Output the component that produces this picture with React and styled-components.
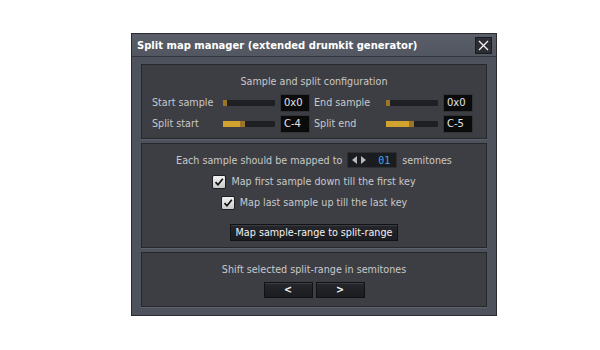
import React from 'react';
import styled, { createGlobalStyle } from 'styled-components';

const Global = createGlobalStyle`
  html, body {
    margin: 0;
    background: #ffffff;
  }
  body {
    font-family: "DejaVu Sans", "Liberation Sans", sans-serif;
    font-size: 9.6px;
  }
`;

const Page = styled.div`
  padding: 33px 0 0 131px;
  width: 600px;
  height: 350px;
  box-sizing: border-box;
`;

const Window = styled.div`
  width: 366px;
  height: 283px;
  box-sizing: border-box;
  border: 1px solid #2a2b2f;
  background: #4e525c;
  display: flex;
  flex-direction: column;
`;

const TitleBar = styled.div`
  height: 22px;
  flex: none;
  border-bottom: 1px solid #33353b;
  background: linear-gradient(#5a5e69, #525660);
  display: flex;
  align-items: center;
  justify-content: space-between;
  padding: 0 4px 0 5px;
`;

const Title = styled.span`
  color: #ffffff;
  font-weight: bold;
  font-size: 10px;
`;

const CloseButton = styled.button`
  width: 17px;
  height: 17px;
  padding: 0;
  border: 1px solid #1b1c1f;
  background: #2c2d32;
  display: flex;
  align-items: center;
  justify-content: center;
`;

const Body = styled.div`
  padding: 7px 9px 8px;
  display: flex;
  flex-direction: column;
  gap: 4px;
`;

const Group = styled.div`
  height: ${p => p.$h}px;
  box-sizing: border-box;
  border: 1px solid #27282c;
  box-shadow: 0 1px 0 #5d616b;
  background: #3d3e44;
  display: flex;
  flex-direction: column;
  align-items: center;
  color: #c9c9c9;
`;

const Caption = styled.div`
  line-height: 12px;
  margin-top: ${p => p.$top}px;
  text-align: center;
`;

const KnobRow = styled.div`
  align-self: stretch;
  display: flex;
  align-items: center;
  height: 18px;
  margin-top: ${p => p.$top}px;
  padding-left: 10px;
`;

const Label = styled.span`
  width: ${p => p.$w}px;
  line-height: 12px;
`;

const Track = styled.div`
  width: 52px;
  height: 6px;
  background: #1f2024;
  border-radius: 1px;
  display: flex;
`;

const Fill = styled.div`
  height: 100%;
  background: linear-gradient(to right, #d2a22e 0, #d2a22e calc(100% - 5px), #9c7626 calc(100% - 5px));
`;

const ValueBox = styled.div`
  width: 30px;
  height: 18px;
  box-sizing: border-box;
  margin: 0 ${p => p.$mr}px 0 ${p => p.$ml}px;
  background: #0b0b0c;
  border: 1px solid #333438;
  color: #e4e4e4;
  font-size: 10px;
  line-height: 16px;
  padding-left: 3px;
`;

const MapRow = styled.div`
  display: flex;
  align-items: center;
  margin-top: 8px;
  height: 16px;
`;

const SpinBox = styled.div`
  width: 50px;
  height: 16px;
  box-sizing: border-box;
  margin: 0 5px 0 5px;
  background: #1b1c20;
  border: 1px solid #2e2f33;
  display: flex;
  align-items: center;
  padding-left: 4px;
  gap: 4px;
`;

const SpinValue = styled.span`
  color: #3ea7f0;
  font-family: "DejaVu Sans Mono", monospace;
  font-size: 10px;
  margin-left: 8px;
`;

const CheckRow = styled.label`
  display: flex;
  align-items: center;
  gap: 5px;
  margin-top: ${p => p.$top}px;
  height: 15px;
`;

const Check = styled.span`
  width: 14px;
  height: 14px;
  box-sizing: border-box;
  border: 1px solid #1e1f22;
  border-radius: 2px;
  background: linear-gradient(#f2f2f2, #c9c9c9);
  display: flex;
  align-items: center;
  justify-content: center;
`;

const DarkButton = styled.button`
  height: ${p => p.$h}px;
  width: ${p => p.$w ? `${p.$w}px` : 'auto'};
  box-sizing: border-box;
  padding: 0 5px;
  border: 1px solid #111214;
  box-shadow: inset 0 1px 0 #3b3c42;
  background: linear-gradient(#26272c, #1b1c20);
  color: #f2f2f2;
  font-family: "DejaVu Sans", sans-serif;
  font-size: 9.6px;
  font-weight: ${p => p.$bold ? 'bold' : 'normal'};
  line-height: 1;
`;

const ButtonRow = styled.div`
  display: flex;
  gap: 3px;
  margin-top: 6px;
`;

const Arrow = ({ dir }) => (
  <svg width="5" height="8" viewBox="0 0 5 8">
    {dir === 'left'
      ? <polygon points="5,0 5,8 0,4" fill="#b8b8b8" />
      : <polygon points="0,0 0,8 5,4" fill="#b8b8b8" />}
  </svg>
);

const Tick = () => (
  <svg width="10" height="10" viewBox="0 0 10 10">
    <path d="M1.5 5.2 L4 7.8 L8.8 1.8" fill="none" stroke="#111" strokeWidth="1.7" />
  </svg>
);

const knobs = [
  { label: 'Start sample', value: '0x0', fill: 4, end: 'End sample', endValue: '0x0', endFill: 4 },
  { label: 'Split start', value: 'C-4', fill: 22, end: 'Split end', endValue: 'C-5', endFill: 28 },
];

export default function App() {
  return (
    <Page>
      <Global />
      <Window>
        <TitleBar>
          <Title>Split map manager (extended drumkit generator)</Title>
          <CloseButton>
            <svg width="11" height="11" viewBox="0 0 11 11">
              <path d="M1 1 L10 10 M10 1 L1 10" stroke="#f4f4f4" strokeWidth="1.3" />
            </svg>
          </CloseButton>
        </TitleBar>
        <Body>
          <Group $h={75}>
            <Caption $top={11}>Sample and split configuration</Caption>
            {knobs.map((k, i) => (
              <KnobRow key={k.label} $top={i === 0 ? 6 : 3}>
                <Label $w={71}>{k.label}</Label>
                <Track><Fill style={{ width: k.fill }} /></Track>
                <ValueBox $ml={5} $mr={4}>{k.value}</ValueBox>
                <Label $w={72}>{k.end}</Label>
                <Track><Fill style={{ width: k.endFill }} /></Track>
                <ValueBox $ml={5} $mr={0}>{k.endValue}</ValueBox>
              </KnobRow>
            ))}
          </Group>
          <Group $h={105}>
            <MapRow>
              Each sample should be mapped to
              <SpinBox>
                <Arrow dir="left" />
                <Arrow dir="right" />
                <SpinValue>01</SpinValue>
              </SpinBox>
              semitones
            </MapRow>
            <CheckRow $top={6}>
              <Check><Tick /></Check>
              Map first sample down till the first key
            </CheckRow>
            <CheckRow $top={6}>
              <Check><Tick /></Check>
              Map last sample up till the last key
            </CheckRow>
            <DarkButton $h={17} style={{ marginTop: 14 }}>Map sample-range to split-range</DarkButton>
          </Group>
          <Group $h={55}>
            <Caption $top={11}>Shift selected split-range in semitones</Caption>
            <ButtonRow>
              <DarkButton $h={16} $w={49} $bold>&lt;</DarkButton>
              <DarkButton $h={16} $w={49} $bold>&gt;</DarkButton>
            </ButtonRow>
          </Group>
        </Body>
      </Window>
    </Page>
  );
}
